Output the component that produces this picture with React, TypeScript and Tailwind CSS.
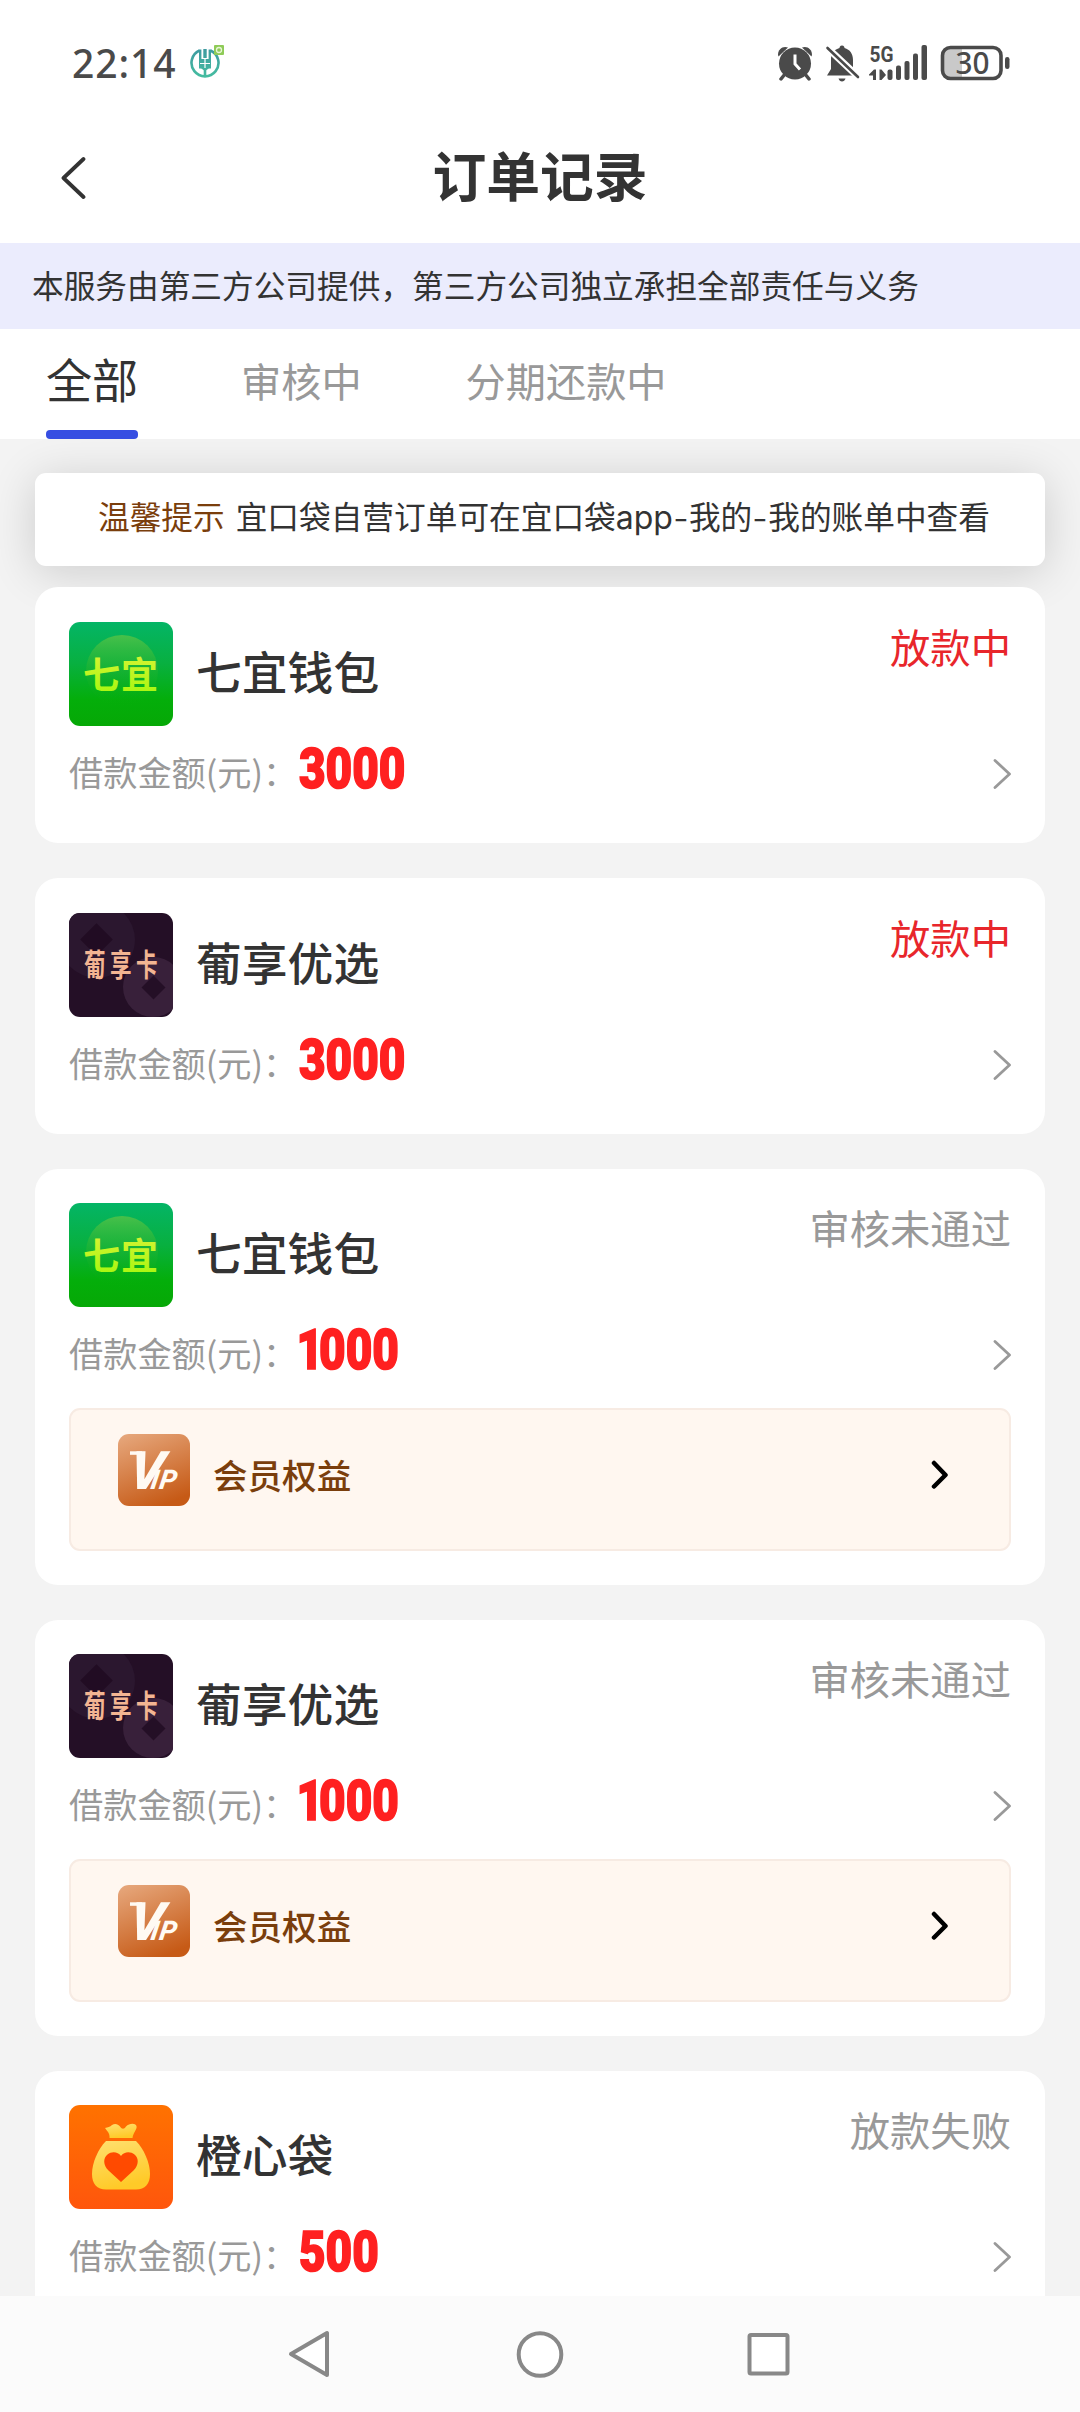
import React from "react";

type LogoKind = "qiyi" | "puxiang" | "chengxin";

interface Order {
  name: string;
  logo: LogoKind;
  amount: string;
  status: string;
  active: boolean;
  vip: boolean;
}

const orders: Order[] = [
  { name: "七宜钱包", logo: "qiyi", amount: "3000", status: "放款中", active: true, vip: false },
  { name: "葡享优选", logo: "puxiang", amount: "3000", status: "放款中", active: true, vip: false },
  { name: "七宜钱包", logo: "qiyi", amount: "1000", status: "审核未通过", active: false, vip: true },
  { name: "葡享优选", logo: "puxiang", amount: "1000", status: "审核未通过", active: false, vip: true },
  { name: "橙心袋", logo: "chengxin", amount: "500", status: "放款失败", active: false, vip: false },
];

function QiyiLogo() {
  return (
    <svg viewBox="0 0 104 104" className="size-[104px] shrink-0">
      <defs>
        <linearGradient id="qy-bg" x1="0" y1="0" x2="0" y2="1">
          <stop offset="0" stopColor="#04b566" />
          <stop offset="0.4" stopColor="#08b040" />
          <stop offset="0.75" stopColor="#04ae0a" />
          <stop offset="1" stopColor="#06a806" />
        </linearGradient>
        <linearGradient id="qy-orb" x1="0" y1="0" x2="0" y2="1">
          <stop offset="0" stopColor="#48c04a" />
          <stop offset="0.6" stopColor="#20b32a" stopOpacity="0.3" />
          <stop offset="1" stopColor="#06ae0a" stopOpacity="0" />
        </linearGradient>
        <linearGradient id="qy-text" x1="0" y1="0" x2="0" y2="1">
          <stop offset="0" stopColor="#e0f23a" />
          <stop offset="1" stopColor="#a0f80a" />
        </linearGradient>
      </defs>
      <rect width="104" height="104" rx="11" fill="url(#qy-bg)" />
      <circle cx="53" cy="49" r="36" fill="url(#qy-orb)" />
      <text
        x="14"
        y="67"
        textLength="75"
        fontSize="37"
        fontWeight="700"
        fontFamily="'Noto Sans CJK SC', sans-serif"
        fill="url(#qy-text)"
      >
        七宜
      </text>
    </svg>
  );
}

function PuxiangLogo() {
  return (
    <svg viewBox="0 0 104 104" className="size-[104px] shrink-0">
      <defs>
        <clipPath id="px-clip">
          <rect width="104" height="104" rx="11" />
        </clipPath>
      </defs>
      <g clipPath="url(#px-clip)">
        <rect width="104" height="104" fill="#240f26" />
        <circle cx="28" cy="27" r="38" fill="#2b172f" />
        <rect x="16" y="15" width="23" height="23" fill="#210c23" transform="rotate(45 27.5 26.5)" />
        <circle cx="84" cy="74" r="30" fill="#38203a" />
        <rect x="76" y="66" width="17" height="17" fill="#240f26" transform="rotate(45 84.5 74.5)" />
      </g>
      <g transform="translate(15 62.5) scale(0.8 1.12)">
        <text
          x="0"
          y="0"
          fontSize="27"
          letterSpacing="5.500"
          fontWeight="700"
          fontFamily="'Noto Sans CJK SC', sans-serif"
          fill="#f3b592"
        >
          葡享卡
        </text>
      </g>
    </svg>
  );
}

function ChengxinLogo() {
  return (
    <svg viewBox="0 0 104 104" className="size-[104px] shrink-0">
      <defs>
        <linearGradient id="cx-bg" x1="0" y1="0" x2="0" y2="1">
          <stop offset="0" stopColor="#ff7200" />
          <stop offset="1" stopColor="#ff560c" />
        </linearGradient>
        <linearGradient id="cx-bag" x1="0" y1="0" x2="0.3" y2="1">
          <stop offset="0" stopColor="#ffe070" />
          <stop offset="1" stopColor="#ffca28" />
        </linearGradient>
      </defs>
      <rect width="104" height="104" rx="11" fill="url(#cx-bg)" />
      <path
        d="M36 23C39 22 41 22 43 20C46 18 49 19 51 21.500C53 24.500 55 24.500 57 21.500C60 18.500 66 17.500 67.500 21C68.500 24 64 28 63.500 33H40.500C41 28 38 26 36 23Z"
        fill="url(#cx-bag)"
      />
      <path
        d="M37 36H67C75 44 81 58 81 69C81 79 76 84.500 67 84.500H37C28 84.500 23 79 23 69C23 58 29 44 37 36Z"
        fill="url(#cx-bag)"
      />
      <path
        d="M52 77L39.500 65.500C34 60 34 53 38.500 49.500C43 46 49 47 52 51C55 47 61 46 65.500 49.500C70 53 70 60 64.500 65.500Z"
        fill="#ff4a00"
      />
    </svg>
  );
}

function Logo({ kind }: { kind: LogoKind }) {
  if (kind === "qiyi") return <QiyiLogo />;
  if (kind === "puxiang") return <PuxiangLogo />;
  return <ChengxinLogo />;
}

function VipBadge() {
  return (
    <svg viewBox="0 0 72 72" className="size-[72px] shrink-0">
      <defs>
        <linearGradient id="vip-bg" x1="0.2" y1="0" x2="0.6" y2="1">
          <stop offset="0" stopColor="#e5a478" />
          <stop offset="1" stopColor="#c65a16" />
        </linearGradient>
      </defs>
      <rect width="72" height="72" rx="11" fill="url(#vip-bg)" />
      <g transform="translate(0 55) skewX(-9)">
        <text x="9" y="0" fontSize="53" fill="#fffaf3" fontFamily="Roboto, sans-serif" fontStyle="italic" fontWeight="800">
          V
          <tspan dx="-11" fontSize="27" fontWeight="800">
            I
          </tspan>
          <tspan dx="1" fontSize="27" fontWeight="800">
            P
          </tspan>
        </text>
      </g>
      <rect x="12" y="17.300" width="12" height="3.500" fill="#fffaf3" />
    </svg>
  );
}

function VipRow() {
  return (
    <div className="mt-[12px] flex h-[143px] rounded-[11px] border-2 border-[#f7ebe3] bg-[#fff7f0] pt-[24px] pl-[47px]">
      <VipBadge />
      <span className="mt-[16px] ml-[23px] text-[34.56px] leading-[48px] font-medium text-[#7a3e0c]">会员权益</span>
      <svg viewBox="0 0 18 30" className="mt-[26px] mr-[60px] ml-auto h-[30px] w-[18px]">
        <path d="M3 3L14.500 15L3 26.500" fill="none" stroke="#000" strokeWidth="4.500" strokeLinecap="round" strokeLinejoin="round" />
      </svg>
    </div>
  );
}

function OrderCard({ order }: { order: Order }) {
  const h = order.vip ? "h-[416px]" : "h-[256px]";
  const top = order.active ? "pt-[35px]" : "pt-[34px]";
  return (
    <section className={`${h} ${top} shrink-0 rounded-[23px] bg-white px-[34px]`}>
      <div className="flex h-[104px]">
        <Logo kind={order.logo} />
        <h2 className="mt-[16px] ml-[23px] text-[45.8px] leading-[64px] font-medium text-[#333]">{order.name}</h2>
        <span
          className={`-mt-[1px] ml-auto text-[40.32px] leading-[50px] ${order.active ? "text-[#e8262b]" : "text-[#999]"}`}
        >
          {order.status}
        </span>
      </div>
      <div className="flex h-[89px] items-center pt-[4px]">
        <span className="-mt-[3px] w-[230px] shrink-0 text-[34.2px] leading-[48px] whitespace-nowrap text-[#999]">借款金额(元)：</span>
        <span className="-mt-[8px] inline-block origin-left scale-x-[0.82] font-[Roboto,sans-serif] text-[56px] leading-[64px] font-black text-[#ff2020] [-webkit-text-stroke:1.6px_#ff2020]">
          {order.amount.startsWith("1") ? (
            <>
              <span className="-ml-[3px] tracking-[-5px]">1</span>
              {order.amount.slice(1)}
            </>
          ) : (
            order.amount
          )}
        </span>
        <svg viewBox="0 0 20 32" className="mt-[2px] ml-auto h-[32px] w-[20px]">
          <path d="M4 2.500L18.500 16L4 29.500" fill="none" stroke="#999" strokeWidth="2.800" strokeLinecap="round" strokeLinejoin="round" />
        </svg>
      </div>
      {order.vip && <VipRow />}
    </section>
  );
}

function StatusBar() {
  return (
    <div className="flex h-[120px] shrink-0 items-start bg-white pt-[40px] text-[#4a4a4a]">
      <span className="ml-[72px] font-['Noto_Sans',sans-serif] text-[39px] leading-[46px] font-medium tracking-[0.9px]">22:14</span>
      <svg viewBox="0 0 36 36" className="mt-[3px] ml-[13px] size-[36px]">
        <defs>
          <linearGradient id="bank" gradientUnits="userSpaceOnUse" x1="0" y1="4" x2="0" y2="34">
            <stop offset="0" stopColor="#3d98a0" />
            <stop offset="1" stopColor="#45bda0" />
          </linearGradient>
        </defs>
        <g fill="none" stroke="url(#bank)">
          <path d="M10.500 7.500A13.500 13.500 0 1 0 21.500 7.500" strokeWidth="2.600" />
          <path d="M11.200 6.500V25.500M20.800 6.500V25.500" strokeWidth="2.400" />
          <rect x="14.300" y="6" width="3.400" height="9" fill="url(#bank)" stroke="none" />
          <rect x="14.700" y="26" width="2.600" height="7.500" fill="url(#bank)" stroke="none" />
        </g>
        <path d="M10 16H22V24L16 28L10 24Z" fill="url(#bank)" />
        <path d="M16 15.500V25M11 20.500H21" stroke="#fff" strokeWidth="1.200" />
        <rect x="25" y="2" width="10" height="10" rx="1" fill="#8fcb58" />
        <circle cx="30" cy="7" r="2.500" fill="none" stroke="#e8f6d8" strokeWidth="1.300" />
      </svg>

      <svg viewBox="0 0 36 36" className="mt-[5px] ml-auto size-[36px]" fill="#4a4a4a">
        <circle cx="18" cy="18.500" r="16" />
        <path d="M1.500 11.500C-0.500 6 5 0 11 2.500Z" />
        <path d="M34.500 11.500C36.500 6 31 0 25 2.500Z" />
        <path d="M8 29L4 34M28 29L32 34" stroke="#4a4a4a" strokeWidth="3.500" strokeLinecap="round" />
        <path d="M18 9.500V19L23 24.500" fill="none" stroke="#fff" strokeWidth="3" />
      </svg>
      <svg viewBox="0 0 36 38" className="mt-[4px] ml-[11px] h-[38px] w-[36px]" fill="#4a4a4a">
        <path d="M18 1.500C20 1.500 20.500 3 20.500 4C26 5.500 29 10 29 16V24L33 31.500H3L7 25V15C7 9 10.500 5.500 15.500 4C15.500 3 16 1.500 18 1.500Z" />
        <path d="M14.500 34.500H21.500C21 36.500 19.500 37.500 18 37.500C16.500 37.500 15 36.500 14.500 34.500Z" />
        <path d="M3 3.500L36 34.500" stroke="#fff" strokeWidth="7" />
        <path d="M3.500 4L34 33" stroke="#4a4a4a" strokeWidth="2.600" strokeLinecap="round" />
      </svg>
      <svg viewBox="0 0 60 38" className="mt-[4px] ml-[9px] h-[38px] w-[60px] overflow-visible" fill="#4a4a4a">
        <text
          x="0.500"
          y="17.500"
          fontSize="22.500"
          fontWeight="700"
          fontFamily="Roboto, sans-serif"
          textLength="24"
          lengthAdjust="spacingAndGlyphs"
        >
          5G
        </text>
        <path d="M0 30.500L5 25.500H7V36H4V31.500H0ZM10.500 25.500H12.500L17 31L12.500 36H10.500Z" />
        <rect x="18.500" y="25.500" width="5" height="10.500" rx="2" />
        <rect x="27" y="21.500" width="5" height="14.500" rx="2" />
        <rect x="35.500" y="17" width="5" height="19" rx="2" />
        <rect x="44" y="9.500" width="5" height="26.500" rx="2" />
        <rect x="52.500" y="1" width="5.500" height="35" rx="2" />
      </svg>
      <svg viewBox="0 0 70 36" className="mt-[5px] mr-[70px] ml-[11px] h-[36px] w-[70px] overflow-visible">
        <path d="M10 3H22V33H10Q3 33 3 26V10Q3 3 10 3Z" fill="#c9c9c9" />
        <rect x="2.500" y="2.500" width="58.500" height="31" rx="8" fill="none" stroke="#4a4a4a" strokeWidth="3.600" />
        <rect x="65" y="12" width="4.500" height="12" rx="2.200" fill="#4a4a4a" />
        <text
          x="15.500"
          y="29"
          fontSize="30"
          fontWeight="500"
          fontFamily="'Noto Sans', sans-serif"
          fill="#4a4a4a"
          textLength="34"
          lengthAdjust="spacingAndGlyphs"
        >
          30
        </text>
      </svg>
    </div>
  );
}

function Header() {
  return (
    <header className="grid h-[123px] shrink-0 grid-cols-[1fr_auto_1fr] items-start bg-white">
      <svg viewBox="0 0 26 44" className="mt-[36px] ml-[60px] h-[44px] w-[26px]">
        <path d="M23.500 3L3.500 22L23.500 41" fill="none" stroke="#333" strokeWidth="3.800" strokeLinecap="round" strokeLinejoin="round" />
      </svg>
      <h1 className="mt-[18px] text-[53.8px] leading-[72px] font-bold text-[#333]">订单记录</h1>
    </header>
  );
}

function Tabs() {
  return (
    <nav className="flex h-[110px] shrink-0 bg-white pl-[46px] text-[40.2px] leading-[60px] text-[#999]">
      <div className="flex w-[92px] flex-col justify-between">
        <span className="mt-[19px] text-[46.08px] leading-[60px] whitespace-nowrap text-[#333]">全部</span>
        <span className="h-[9px] rounded-[4px] bg-[#364ee2]" />
      </div>
      <span className="mt-[21px] ml-[103px]">审核中</span>
      <span className="mt-[21px] ml-[104px]">分期还款中</span>
    </nav>
  );
}

function SystemNav() {
  return (
    <div className="flex h-[116px] shrink-0 items-start bg-[#fbfbfb] pt-[34px]">
      <svg viewBox="0 0 42 48" className="ml-[288px] h-[48px] w-[42px]">
        <path d="M39 3V45L3 24Z" fill="#fff" stroke="#888" strokeWidth="4" strokeLinejoin="round" />
      </svg>
      <svg viewBox="0 0 48 48" className="ml-[186px] size-[48px]">
        <circle cx="24" cy="24.500" r="21.300" fill="#fff" stroke="#888" strokeWidth="4" />
      </svg>
      <svg viewBox="0 0 44 48" className="ml-[182px] h-[48px] w-[44px]">
        <rect x="3.500" y="5" width="38" height="38.500" rx="1.500" fill="#fff" stroke="#888" strokeWidth="4" />
      </svg>
    </div>
  );
}

export default function App() {
  return (
    <div className="flex h-[2412px] w-[1080px] flex-col overflow-hidden bg-[#f3f3f3] font-['Noto_Sans_CJK_SC',sans-serif]">
      <StatusBar />
      <Header />
      <div className="h-[86px] shrink-0 bg-[#ebecfd] pt-[17px] pl-[32px] text-[31.68px] leading-[48px] text-[#333]">
        本服务由第三方公司提供，第三方公司独立承担全部责任与义务
      </div>
      <Tabs />
      <main className="flex min-h-0 flex-1 flex-col overflow-hidden px-[35px] pt-[34px]">
        <div className="mb-[21px] flex h-[93px] shrink-0 gap-[11px] rounded-[11px] bg-white pt-[18px] pl-[63px] text-[31.68px] leading-[48px] whitespace-nowrap text-[#333] shadow-[0_6px_46px_rgba(0,0,0,0.16)]">
          <span className="text-[#7a3e0c]">温馨提示</span>
          <span>
            宜口袋自营订单可在宜口袋
            <span className="font-[Inter,sans-serif] text-[32px]">app</span>
            <span className="inline-block w-[16px] scale-x-[1.3] text-center">-</span>
            我的
            <span className="inline-block w-[16px] scale-x-[1.3] text-center">-</span>
            我的账单中查看
          </span>
        </div>
        <div className="flex flex-col gap-[35px]">
          {orders.map((order, i) => (
            <OrderCard key={i} order={order} />
          ))}
        </div>
      </main>
      <SystemNav />
    </div>
  );
}
